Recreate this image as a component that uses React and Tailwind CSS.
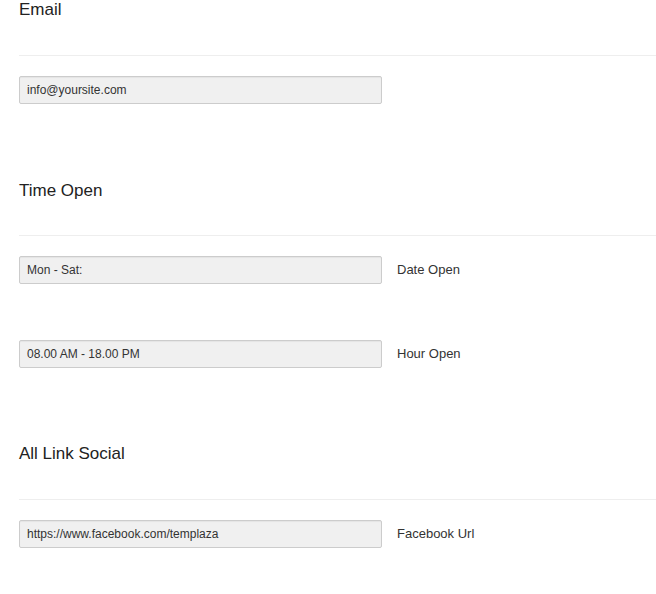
import React from "react";

function Field({ value, label }) {
  return (
    <div className="flex items-center">
      <div className="w-[363px] h-[28px] shrink-0 border border-[#cccccc] rounded-[2px] bg-[#f0f0f0] shadow-[inset_0_1px_1px_rgba(0,0,0,0.05)] flex items-center pl-[7px] text-[12px] text-[#333333]">
        {value}
      </div>
      {label && <div className="ml-[15px] text-[13px] text-[#333333]">{label}</div>}
    </div>
  );
}

function Heading({ children, className = "" }) {
  return <div className={"text-[17px] leading-[20px] text-[#222222] " + className}>{children}</div>;
}

function Rule({ className = "" }) {
  return <div className={"border-t border-[#eeeeee] " + className} />;
}

export default function App() {
  return (
    <div
      className="w-[656px] h-[594px] bg-white pl-[19px] overflow-hidden"
      style={{ fontFamily: '"Liberation Sans", Arial, sans-serif' }}
    >
      <Heading>Email</Heading>
      <Rule className="mt-[35px]" />
      <div className="mt-[20px]">
        <Field value="info@yoursite.com" />
      </div>

      <Heading className="mt-[77px]">Time Open</Heading>
      <Rule className="mt-[34px]" />
      <div className="mt-[20px] flex flex-col gap-[56px]">
        <Field value="Mon - Sat:" label="Date Open" />
        <Field value="08.00 AM - 18.00 PM" label="Hour Open" />
      </div>

      <Heading className="mt-[76px]">All Link Social</Heading>
      <Rule className="mt-[35px]" />
      <div className="mt-[20px]">
        <Field value="https://www.facebook.com/templaza" label="Facebook Url" />
      </div>
    </div>
  );
}
